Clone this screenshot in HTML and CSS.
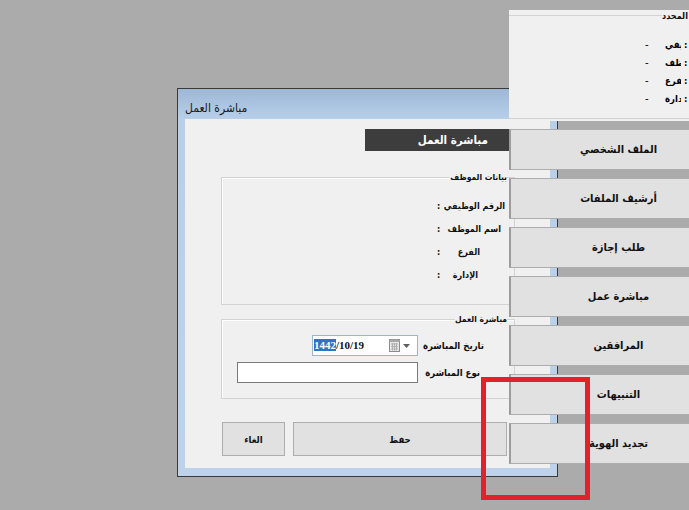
FILE: index.html
```html
<!DOCTYPE html>
<html lang="ar">
<head>
<meta charset="utf-8">
<title>مباشرة العمل</title>
<link rel="stylesheet" href="styles.css">
</head>
<body>
<div class="desktop">
  <div class="dialog">
    <div class="titlebar">مباشرة العمل</div>
    <div class="client">
      <div class="banner">مباشرة العمل</div>

      <div class="group group-employee">
        <div class="group-title">بيانات الموظف</div>
        <div class="field-row"><div class="field-label"><span>الرقم الوظيفي</span><span>:</span></div></div>
        <div class="field-row"><div class="field-label field-mid"><span>اسم الموظف</span><span>:</span></div></div>
        <div class="field-row"><div class="field-label field-short"><span>الفرع</span><span>:</span></div></div>
        <div class="field-row"><div class="field-label field-shorter"><span>الإدارة</span><span>:</span></div></div>
      </div>

      <div class="group group-start">
        <div class="group-title">مباشرة العمل</div>
        <div class="input-row">
          <span class="input-label">تاريخ المباشرة</span>
          <div class="datepicker">
            <span class="date-text"><span class="date-sel">1442</span>/10/19</span>
            <svg class="cal-icon" width="11" height="13" viewBox="0 0 11 13">
              <rect x="0.5" y="0.5" width="10" height="12" fill="#e8e8e8" stroke="#8c8c8c"/>
              <rect x="0.5" y="0.5" width="10" height="2.5" fill="#a8a8a8"/>
              <path d="M2 5h7M2 7.5h7M2 10h7M3.5 4v7.5M5.5 4v7.5M7.5 4v7.5" stroke="#b0b0b0" stroke-width="1"/>
            </svg>
            <svg class="drop-arrow" width="7" height="4" viewBox="0 0 7 4"><path d="M0 0h7L3.5 4z" fill="#5f5f5f"/></svg>
          </div>
        </div>
        <div class="input-row">
          <span class="input-label input-label-b">نوع المباشرة</span>
          <div class="textbox"></div>
        </div>
      </div>

      <div class="actions">
        <button class="btn btn-cancel">الغاء</button>
        <button class="btn btn-save">حفظ</button>
      </div>
    </div>
  </div>

  <div class="info-panel">
    <div class="info-group">
      <div class="info-title">بيانات الموظف المحدد</div>
      <div class="info-row"><span class="info-dash">-</span><span class="info-clip"><span class="info-label">الرقم الوظيفي</span></span><span class="info-colon">:</span></div>
      <div class="info-row"><span class="info-dash">-</span><span class="info-clip"><span class="info-label">اسم الموظف</span></span><span class="info-colon">:</span></div>
      <div class="info-row"><span class="info-dash">-</span><span class="info-clip"><span class="info-label">الفرع</span></span><span class="info-colon">:</span></div>
      <div class="info-row"><span class="info-dash">-</span><span class="info-clip"><span class="info-label">الإدارة</span></span><span class="info-colon">:</span></div>
    </div>
  </div>

  <nav class="side-menu">
    <button class="menu-btn">الملف الشخصي</button>
    <button class="menu-btn">أرشيف الملفات</button>
    <button class="menu-btn">طلب إجازة</button>
    <button class="menu-btn">مباشرة عمل</button>
    <button class="menu-btn">المرافقين</button>
    <button class="menu-btn">التنبيهات</button>
    <button class="menu-btn">تجديد الهوية</button>
  </nav>

  <div class="highlight-box"></div>
</div>
</body>
</html>
```

FILE: styles.css
```css
* { box-sizing: border-box; }

html, body {
  margin: 0;
  padding: 0;
  background: #ababab;
}

body {
  font-family: "DejaVu Sans Condensed", "DejaVu Sans", sans-serif;
  font-stretch: condensed;
  color: #111;
}

.desktop {
  position: relative;
  width: 689px;
  height: 510px;
  overflow: hidden;
  background: #ababab;
}

/* ---------- dialog window ---------- */
.dialog {
  position: absolute;
  left: 177px;
  top: 88px;
  width: 381px;
  height: 389px;
  border: 1px solid #3a3a3a;
  padding: 0 7px 8px 7px;
  display: flex;
  flex-direction: column;
  background: linear-gradient(to bottom, #9db7d6 0px, #b7cfe9 30px, #bcd3eb 100%);
}

.titlebar {
  height: 30px;
  flex: none;
  font-size: 12px;
  line-height: 14px;
  padding-top: 12px;
  color: #1b1b1b;
  direction: ltr;
  text-align: left;
}

.client {
  flex: 1;
  background: #f0f0f0;
  padding: 10px 0 0 36px;
}

.banner {
  margin-left: 144px;
  width: 185px;
  height: 22px;
  background: #3d3d3d;
  color: #fff;
  font-weight: bold;
  font-size: 11.5px;
  line-height: 22px;
  direction: rtl;
  text-align: right;
  padding-right: 62px;
}

/* group boxes */
.group {
  position: relative;
  width: 294px;
  border: 1px solid #d3d3d3;
  box-shadow: inset 1px 1px 0 #fff;
}

.group-employee {
  margin-top: 26px;
  height: 128px;
  padding-top: 16px;
}

.group-start {
  margin-top: 14px;
  height: 80px;
  padding-top: 15px;
}

.group-title {
  position: absolute;
  right: 7px;
  top: -7px;
  background: #f0f0f0;
  font-size: 8.5px;
  font-weight: bold;
  line-height: 12px;
  direction: rtl;
}

.field-row {
  height: 23px;
  display: flex;
  align-items: center;
  direction: rtl;
}

.field-label {
  margin-right: 9px;
  width: 68px;
  display: flex;
  justify-content: space-between;
  font-size: 9px;
  font-weight: bold;
  white-space: nowrap;
}

.field-mid { padding-right: 4px; }
.field-short { padding-right: 25px; }
.field-shorter { padding-right: 27px; }

.input-row {
  height: 21px;
  display: flex;
  align-items: center;
  direction: rtl;
}

.input-row + .input-row { margin-top: 6px; }

.input-label {
  margin-right: 30px;
  width: 66px;
  font-size: 9.5px;
  font-weight: bold;
  white-space: nowrap;
}

.input-label-b { padding-right: 4px; }

.datepicker {
  width: 106px;
  height: 21px;
  border: 1px solid #9fb3cc;
  background: #fff;
  direction: ltr;
  display: flex;
  align-items: center;
  padding-left: 1px;
}

.date-text {
  font-size: 11px;
  font-weight: bold;
  line-height: 13px;
  font-family: "Liberation Serif", serif;
  font-stretch: normal;
  color: #111;
}

.date-sel {
  background: #3272c4;
  color: #fff;
}

.cal-icon {
  margin-left: auto;
  display: block;
}

.drop-arrow {
  display: block;
  margin: 0 7px 0 3px;
}

.textbox {
  width: 181px;
  height: 21px;
  border: 1px solid #7a7a7a;
  background: #fff;
}

.actions {
  margin-top: 23px;
  display: flex;
  gap: 8px;
  padding-left: 1px;
}

.btn {
  height: 34px;
  background: #e1e1e1;
  border: 1px solid #adadad;
  font-family: inherit;
  font-stretch: condensed;
  font-size: 9.5px;
  font-weight: bold;
  color: #111;
  padding: 0;
}

.btn-cancel { width: 63px; }
.btn-save { width: 214px; }

/* ---------- info panel (top right) ---------- */
.info-panel {
  position: absolute;
  left: 509px;
  top: 10px;
  width: 180px;
  height: 111px;
  background: #f0f0f0;
  padding-top: 5px;
  overflow: hidden;
}

.info-group {
  position: relative;
  height: 104px;
  border-top: 1px solid #d3d3d3;
  border-bottom: 1px solid #d3d3d3;
  padding-top: 19px;
}

.info-title {
  position: absolute;
  left: 153px;
  top: -6px;
  white-space: nowrap;
  background: #f0f0f0;
  font-size: 9px;
  font-weight: bold;
  line-height: 12px;
  direction: rtl;
}

.info-row {
  height: 18px;
  display: flex;
  align-items: center;
  padding-left: 136px;
  font-size: 9.5px;
  font-weight: bold;
  white-space: nowrap;
  color: #000;
}

.info-dash {
  width: 20px;
  flex: none;
  font-family: "Liberation Sans", sans-serif;
  font-weight: normal;
  font-size: 11px;
}

.info-clip {
  width: 16px;
  flex: none;
  overflow: hidden;
  direction: ltr;
  text-align: left;
}

.info-label {
  direction: rtl;
  unicode-bidi: isolate;
}

.info-colon {
  margin-left: 3px;
  flex: none;
}

/* ---------- side menu ---------- */
.side-menu {
  position: absolute;
  left: 509px;
  top: 129px;
  display: flex;
  flex-direction: column;
  gap: 8px;
}

.menu-btn {
  width: 218px;
  height: 41px;
  background: #e1e1e1;
  border: 1px solid #adadad;
  border-left: 2px solid #9c9c9c;
  font-family: inherit;
  font-stretch: condensed;
  font-size: 11px;
  font-weight: bold;
  color: #111;
  padding: 0;
  direction: rtl;
}

/* ---------- red annotation ---------- */
.highlight-box {
  position: absolute;
  left: 481px;
  top: 377px;
  width: 109px;
  height: 123px;
  border: 5px solid #e0232b;
}
```
